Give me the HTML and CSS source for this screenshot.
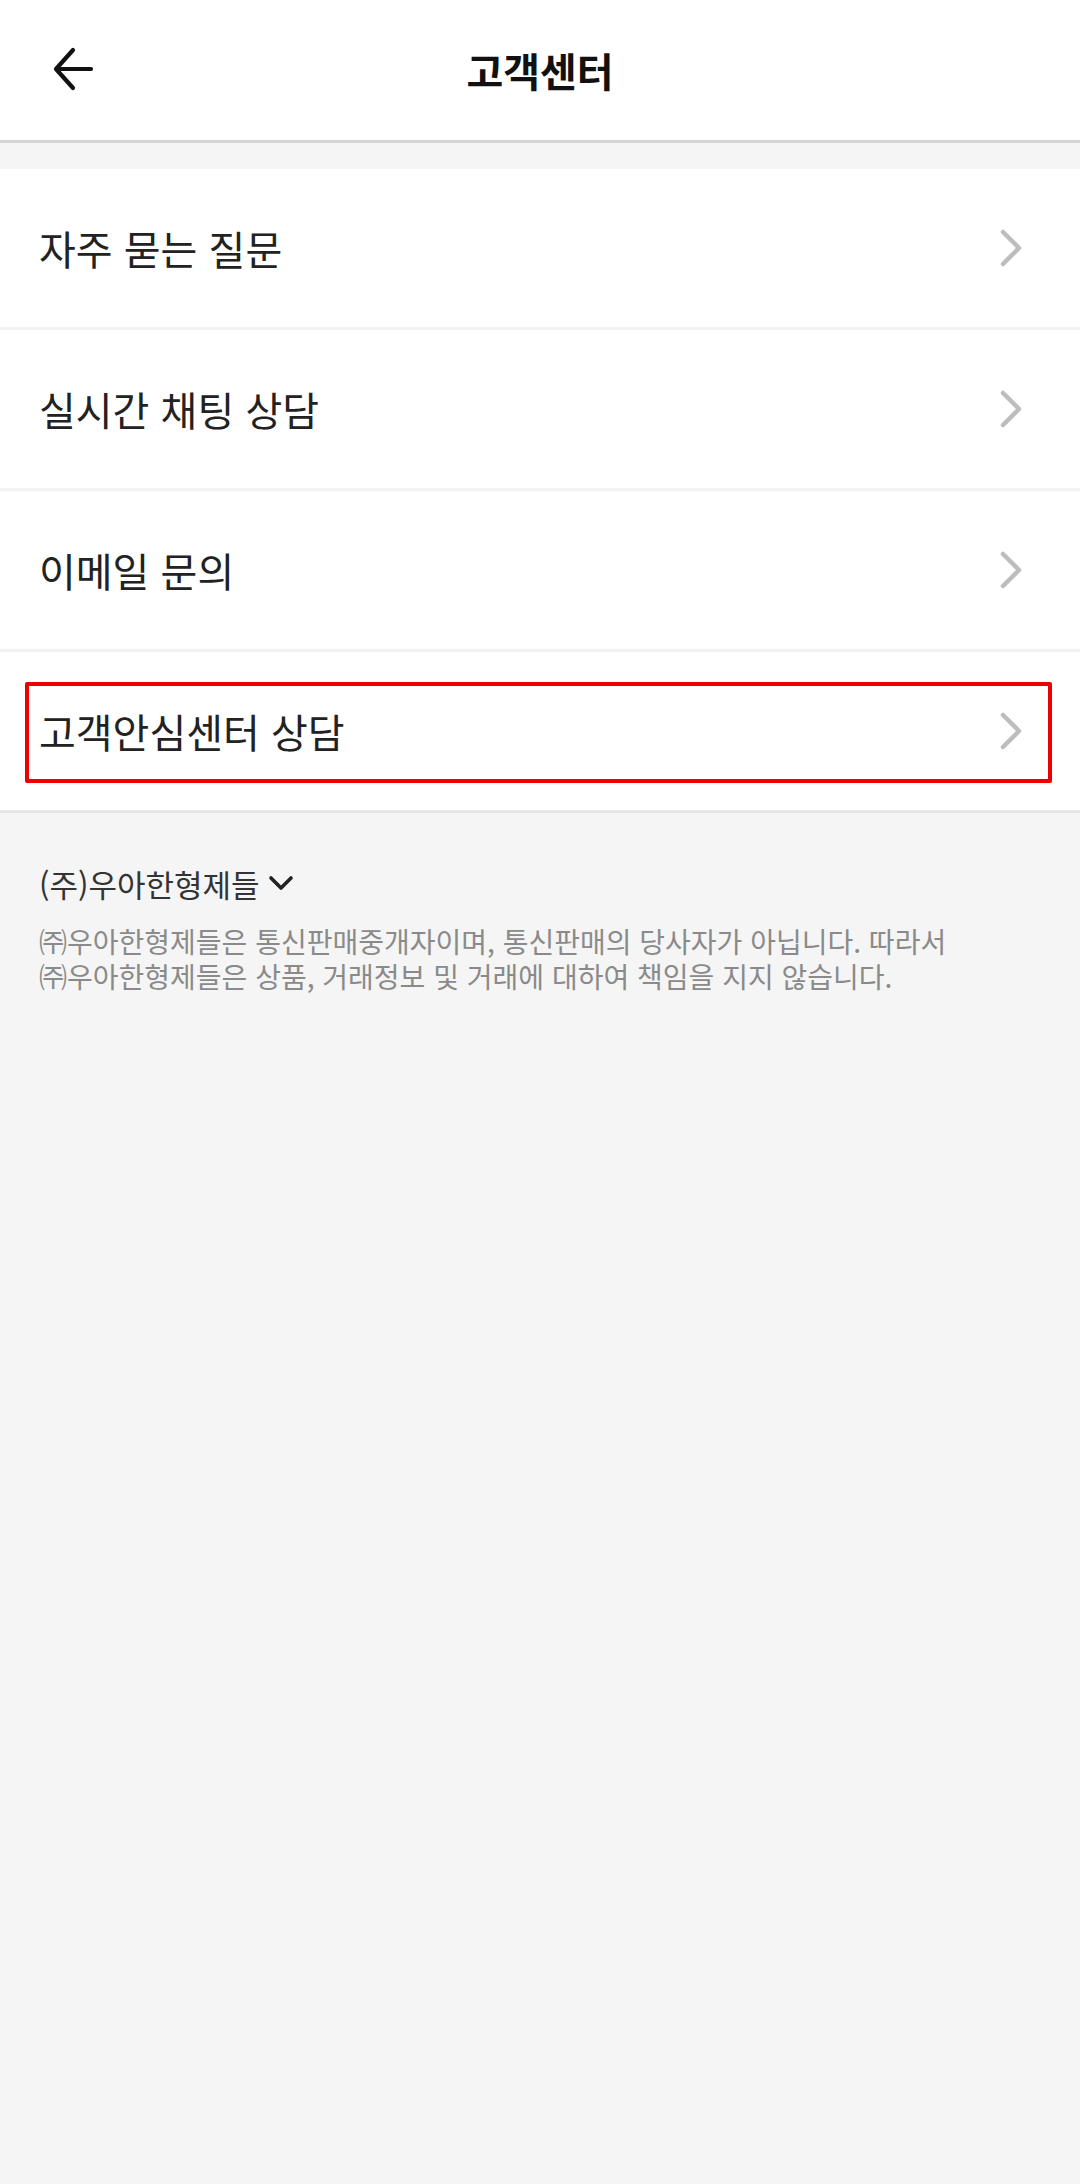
FILE: index.html
```html
<!DOCTYPE html>
<html lang="ko">
<head>
    <meta charset="UTF-8">
    <meta name="viewport" content="width=device-width, initial-scale=1.0">
    <title>고객센터</title>
    <link rel="stylesheet" href="styles.css">
</head>
<body>
    <header class="top-bar">
        <button class="back-btn" aria-label="뒤로">
            <svg width="48" height="48" viewBox="0 0 48 48">
                <path d="M43 24H9M25 5L8 24l17 19" fill="none" stroke="#111" stroke-width="4.2" stroke-linecap="round" stroke-linejoin="round"/>
            </svg>
        </button>
        <h1>고객센터</h1>
    </header>

    <ul class="menu-list">
        <li class="menu-item">
            <span>자주 묻는 질문</span>
            <svg class="chevron" width="22" height="40" viewBox="0 0 22 40"><path d="M3 4l16 16L3 36" fill="none" stroke="#bdbdbd" stroke-width="4.5" stroke-linecap="round" stroke-linejoin="round"/></svg>
        </li>
        <li class="menu-item">
            <span>실시간 채팅 상담</span>
            <svg class="chevron" width="22" height="40" viewBox="0 0 22 40"><path d="M3 4l16 16L3 36" fill="none" stroke="#bdbdbd" stroke-width="4.5" stroke-linecap="round" stroke-linejoin="round"/></svg>
        </li>
        <li class="menu-item">
            <span>이메일 문의</span>
            <svg class="chevron" width="22" height="40" viewBox="0 0 22 40"><path d="M3 4l16 16L3 36" fill="none" stroke="#bdbdbd" stroke-width="4.5" stroke-linecap="round" stroke-linejoin="round"/></svg>
        </li>
        <li class="menu-item highlighted">
            <span>고객안심센터 상담</span>
            <svg class="chevron" width="22" height="40" viewBox="0 0 22 40"><path d="M3 4l16 16L3 36" fill="none" stroke="#bdbdbd" stroke-width="4.5" stroke-linecap="round" stroke-linejoin="round"/></svg>
            <div class="mark-box"></div>
        </li>
    </ul>

    <footer class="company-info">
        <div class="company-name">
            (주)우아한형제들
            <svg width="28" height="20" viewBox="0 0 28 20"><path d="M3 4l10 10L23 4" fill="none" stroke="#222" stroke-width="3.6" stroke-linecap="round" stroke-linejoin="round"/></svg>
        </div>
        <p class="disclaimer">
            <span class="line">㈜우아한형제들은 통신판매중개자이며, 통신판매의 당사자가 아닙니다. 따라서</span>
            <span class="line">㈜우아한형제들은 상품, 거래정보 및 거래에 대하여 책임을 지지 않습니다.</span>
        </p>
    </footer>
</body>
</html>
```

FILE: styles.css
```css
body {
    margin: 0;
    background-color: #f5f5f5;
    font-family: "Noto Sans CJK KR", "Noto Sans", sans-serif;
    color: #222;
}

.top-bar {
    position: relative;
    height: 140px;
    background-color: white;
    border-bottom: 3px solid #d6d6d6;
    display: flex;
    align-items: center;
    justify-content: center;
}

.top-bar h1 {
    margin: 0;
    font-size: 40px;
    font-weight: 700;
    color: #111;
}

.back-btn {
    position: absolute;
    left: 48px;
    top: 45px;
    padding: 0;
    border: none;
    background: none;
    display: flex;
}

.menu-list {
    list-style: none;
    margin: 26px 0 0;
    padding: 0;
    background-color: white;
    border-bottom: 3px solid #e6e6e6;
}

.menu-item {
    position: relative;
    height: 158px;
    display: flex;
    align-items: center;
    justify-content: space-between;
    padding: 0 58px 0 39px;
    font-size: 40px;
    line-height: 48px;
    border-top: 3px solid #f2f2f2;
}

.menu-item:first-child {
    border-top: none;
}

.mark-box {
    position: absolute;
    left: 25px;
    top: 30px;
    width: 1027px;
    height: 101px;
    border: 4px solid #ee0000;
    border-radius: 2px;
    box-sizing: border-box;
}

.company-info {
    padding: 51px 39px 0;
}

.company-name {
    display: flex;
    align-items: center;
    gap: 8px;
    font-size: 31px;
    line-height: 40px;
    color: #333;
}

.disclaimer {
    margin: 20px 0 0;
    font-size: 28px;
    color: #8a8a8a;
}

.disclaimer .line {
    display: block;
    line-height: 35px;
    white-space: nowrap;
}
```
